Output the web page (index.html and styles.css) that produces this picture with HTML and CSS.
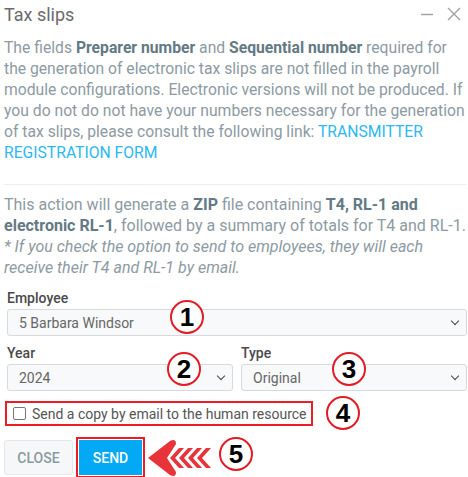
FILE: index.html
```html
<!DOCTYPE html>
<html lang="en">
<head>
  <meta charset="UTF-8">
  <title>Tax slips</title>
  <link rel="stylesheet" href="styles.css">
</head>
<body>
  <div class="dialogue">
    <div class="entete">
      <span class="titre">Tax slips</span>
      <div class="actions">
        <svg width="14" height="14" viewBox="0 0 14 14"><path d="M1 7.5h12" stroke="#a0a0a0" stroke-width="1.4"/></svg>
        <svg width="14" height="14" viewBox="0 0 14 14"><path d="M1 1l12 12M13 1L1 13" stroke="#a0a0a0" stroke-width="1.4"/></svg>
      </div>
    </div>

    <p class="texte avertissement">The fields <b>Preparer number</b> and <b>Sequential number</b> required for the generation of electronic tax slips are not filled in the payroll module configurations. Electronic versions will not be produced. If you do not do not have your numbers necessary for the generation of tax slips, please consult the following link: <a href="#">TRANSMITTER REGISTRATION FORM</a></p>

    <hr class="separateur">

    <p class="texte">This action will generate a <b>ZIP</b> file containing <b>T4, RL-1 and electronic RL-1</b>, followed by a summary of totals for T4 and RL-1.<br><i>* If you check the option to send to employees, they will each receive their T4 and RL-1 by email.</i></p>

    <div class="champ">
      <label>Employee</label>
      <div class="select">5 Barbara Windsor<span class="chevron"></span></div>
      <span class="pastille p1">1</span>
    </div>

    <div class="rangee">
      <div class="champ">
        <label>Year</label>
        <div class="select">2024<span class="chevron"></span></div>
        <span class="pastille p2">2</span>
      </div>
      <div class="champ">
        <label>Type</label>
        <div class="select">Original<span class="chevron"></span></div>
        <span class="pastille p3">3</span>
      </div>
    </div>

    <div class="case-ligne">
      <label class="case encadre"><span class="boite"></span>Send a copy by email to the human resource</label>
      <span class="pastille p4">4</span>
    </div>

    <div class="boutons">
      <button class="btn fermer">CLOSE</button>
      <span class="encadre envoi"><button class="btn envoyer">SEND</button></span>
      <svg class="fleche" width="66" height="38" viewBox="0 0 66 38">
        <path d="M0 19 L22 2 Q28 -1 28 5 L19 19 L28 33 Q28 39 22 36 Z" fill="#e8333a"/>
        <path d="M22 19 L31 9 L36 9 L27 19 L36 29 L31 29 Z" fill="#e8333a"/>
        <path d="M31 19 L40 9 L45 9 L36 19 L45 29 L40 29 Z" fill="#e8333a"/>
        <path d="M40 19 L49 9 L54 9 L45 19 L54 29 L49 29 Z" fill="#e8333a"/>
        <path d="M49 19 L58 9 L63 9 L54 19 L63 29 L58 29 Z" fill="#e8333a"/>
      </svg>
      <span class="pastille p5">5</span>
    </div>
  </div>
</body>
</html>
```

FILE: styles.css
```css
body {
  margin: 0;
  background: #fff;
  font-family: Roboto, "Liberation Sans", sans-serif;
}

.dialogue {
  position: relative;
  width: 468px;
  height: 477px;
  padding: 0 0 0 4px;
  box-sizing: border-box;
  overflow: hidden;
}

.entete {
  display: flex;
  justify-content: space-between;
  align-items: center;
  height: 28px;
}

.titre {
  font-size: 18px;
  color: #6b6b6b;
}

.actions {
  display: flex;
  gap: 13px;
  padding-right: 7px;
}

.texte {
  margin: 9px 0 0;
  font-size: 16px;
  line-height: 21px;
  color: #8c9aa2;
}

.avertissement {
  font-size: 15.7px;
}

.texte b {
  font-weight: 700;
  color: #637983;
}

.texte a {
  color: #2bb8f3;
  text-decoration: none;
}

.separateur {
  border: 0;
  border-top: 1px solid #eceff1;
  margin: 21px 2px 0 0;
}

.champ {
  position: relative;
  display: flex;
  flex-direction: column;
  flex: 1;
  margin-top: 12px;
  margin-right: 1px;
}

.champ label {
  font-size: 14px;
  font-weight: 500;
  color: #4a4a4a;
  padding-left: 3px;
  height: 19px;
}

.select {
  display: flex;
  align-items: center;
  justify-content: space-between;
  height: 25px;
  margin: 0 0 0 3px;
  padding: 0 8px 0 11px;
  border: 1px solid #d7dadc;
  border-radius: 3px;
  background: #f8f9fa;
  font-size: 14px;
  color: #666;
}

.chevron {
  width: 5px;
  height: 5px;
  border-right: 1.6px solid #444;
  border-bottom: 1.6px solid #444;
  transform: rotate(45deg);
  margin-top: -4px;
}

.rangee {
  display: flex;
  gap: 4px;
}

.rangee .champ {
  margin-top: 9px;
}

.case-ligne {
  position: relative;
  margin-top: 10px;
}

.case {
  display: inline-flex;
  align-items: center;
  gap: 6px;
  height: 21px;
  padding: 0 4px 0 6px;
  font-size: 14px;
  color: #555;
  margin-left: 1px;
}

.boite {
  width: 11px;
  height: 11px;
  border: 1px solid #777;
  border-radius: 2px;
}

.encadre {
  border: 2px solid #ee1c24;
}

.boutons {
  position: relative;
  display: flex;
  align-items: center;
  gap: 3px;
  margin-top: 11px;
}

.btn {
  height: 35px;
  border-radius: 3px;
  font-family: Roboto, "Liberation Sans", sans-serif;
  font-size: 14px;
  font-weight: 500;
  padding: 0;
}

.fermer {
  width: 69px;
  background: #f6f7f8;
  border: 1px solid #e4e7e9;
  color: #8a9aa2;
}

.envoi {
  display: flex;
  padding: 1px;
}

.envoyer {
  width: 63px;
  background: #03a9f4;
  border: 0;
  border-radius: 0;
  color: #fff;
}

.fleche {
  margin-left: 0;
}

.pastille {
  position: absolute;
  width: 30px;
  height: 30px;
  border: 2px solid #e41b23;
  border-radius: 50%;
  background: #fff;
  font-family: "Liberation Sans", Arial, sans-serif;
  font-weight: 700;
  font-size: 26px;
  line-height: 30px;
  text-align: center;
  color: #000;
}

.p1 { left: 166px; top: 10px; }
.p2 { left: 163px; top: 7px; }
.p3 { left: 94px; top: 7px; }
.p4 { left: 322px; top: -5px; }
.p5 { left: 215px; top: 0; }
```
